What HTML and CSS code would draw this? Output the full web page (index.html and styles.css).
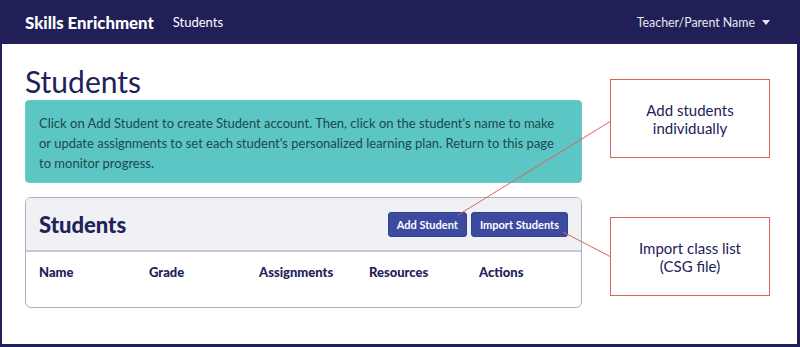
FILE: index.html
```html
<!DOCTYPE html>
<html lang="en">

<head>
    <meta charset="utf-8">
    <title>Skills Enrichment - Students</title>
    <link rel="stylesheet" href="styles.css">
</head>

<body>
    <div class="ramme">

        <nav class="topbar">
            <a class="brand" href="#">Skills Enrichment</a>
            <a class="navlink" href="#">Students</a>
            <span class="bruger">Teacher/Parent Name <span class="pil"></span></span>
        </nav>

        <main class="indhold">
            <h1>Students</h1>

            <div class="info">
                Click on Add Student to create Student account. Then, click on the student's name to make
                or update assignments to set each student's personalized learning plan. Return to this page
                to monitor progress.
            </div>

            <section class="kort">
                <div class="kort-top">
                    <h2>Students</h2>
                    <div class="knapper">
                        <button>Add Student</button>
                        <button>Import Students</button>
                    </div>
                </div>
                <div class="kolonner">
                    <span>Name</span>
                    <span>Grade</span>
                    <span>Assignments</span>
                    <span>Resources</span>
                    <span>Actions</span>
                </div>
            </section>
        </main>

        <!-- noter lagt ovenpaa skaermbilledet -->
        <svg class="streger" width="800" height="347">
            <line x1="458" y1="215" x2="611" y2="121" />
            <line x1="563" y1="232" x2="611" y2="257" />
        </svg>
        <div class="note note-1">Add students<br>individually</div>
        <div class="note note-2">Import class list<br>(CSG file)</div>

    </div>
</body>

</html>
```

FILE: styles.css
```css
* {
    box-sizing: border-box;
}

body {
    margin: 0;
    font-family: Lato, sans-serif;
    color: #22215a;
}

.ramme {
    position: relative;
    height: 347px;
    border: 2px solid #201f57;
    border-top: 0;
    border-bottom-width: 3px;
    border-right-width: 3px;
    overflow: hidden;
}

.topbar {
    display: flex;
    align-items: center;
    height: 44px;
    padding: 0 30px 0 25px;
    background-color: #201f57;
    margin: 0 -3px 0 -2px;
}

.brand {
    color: white;
    font-weight: 900;
    font-size: 16.8px;
    text-decoration: none;
    margin-right: 19px;
}

.navlink {
    color: white;
    font-size: 13px;
    text-decoration: none;
}

.bruger {
    margin-left: auto;
    color: #e6e6f0;
    font-size: 12.4px;
    display: flex;
    align-items: center;
    gap: 7px;
}

.pil {
    border-left: 4px solid transparent;
    border-right: 4px solid transparent;
    border-top: 5px solid #e6e6f0;
}

.indhold {
    width: 580px;
    padding-left: 23px;
}

h1 {
    font-weight: 400;
    font-size: 30px;
    margin: 19px 0 1px;
    line-height: 36px;
}

.info {
    background-color: #5bc6c4;
    border: 1px solid #67cbc9;
    border-radius: 4px;
    color: #1d4850;
    font-size: 13px;
    line-height: 20px;
    padding: 12px 13px 12px 13px;
    height: 83px;
}

.kort {
    margin-top: 14px;
    border: 1px solid #a9b0bf;
    border-radius: 6px;
    height: 111px;
    overflow: hidden;
}

.kort-top {
    display: flex;
    align-items: center;
    justify-content: space-between;
    height: 54px;
    padding: 0 13px 0 13px;
    background-color: #f0f1f5;
    border-bottom: 2px solid #c4c9d4;
}

h2 {
    margin: 0;
    font-size: 22px;
    font-weight: 900;
}

.knapper {
    display: flex;
    gap: 4px;
}

button {
    font-family: Lato, sans-serif;
    font-weight: 700;
    font-size: 11px;
    color: white;
    background-color: #3c4aa0;
    border: 1px solid #33408f;
    border-radius: 3px;
    height: 25px;
    padding: 0 8px;
}

.kolonner {
    display: grid;
    grid-template-columns: repeat(5, 110px);
    padding: 12px 13px;
    font-size: 13px;
    font-weight: 900;
}

.streger {
    position: absolute;
    left: -2px;
    top: 0;
}

.streger line {
    stroke: #e0605a;
    stroke-width: 1;
}

.note {
    position: absolute;
    left: 608px;
    width: 160px;
    height: 79px;
    border: 1px solid #e0605a;
    background-color: white;
    display: flex;
    align-items: center;
    justify-content: center;
    text-align: center;
    font-size: 15px;
    line-height: 18px;
    color: #22215a;
}

.note-1 {
    top: 79px;
}

.note-2 {
    top: 217px;
}
```
